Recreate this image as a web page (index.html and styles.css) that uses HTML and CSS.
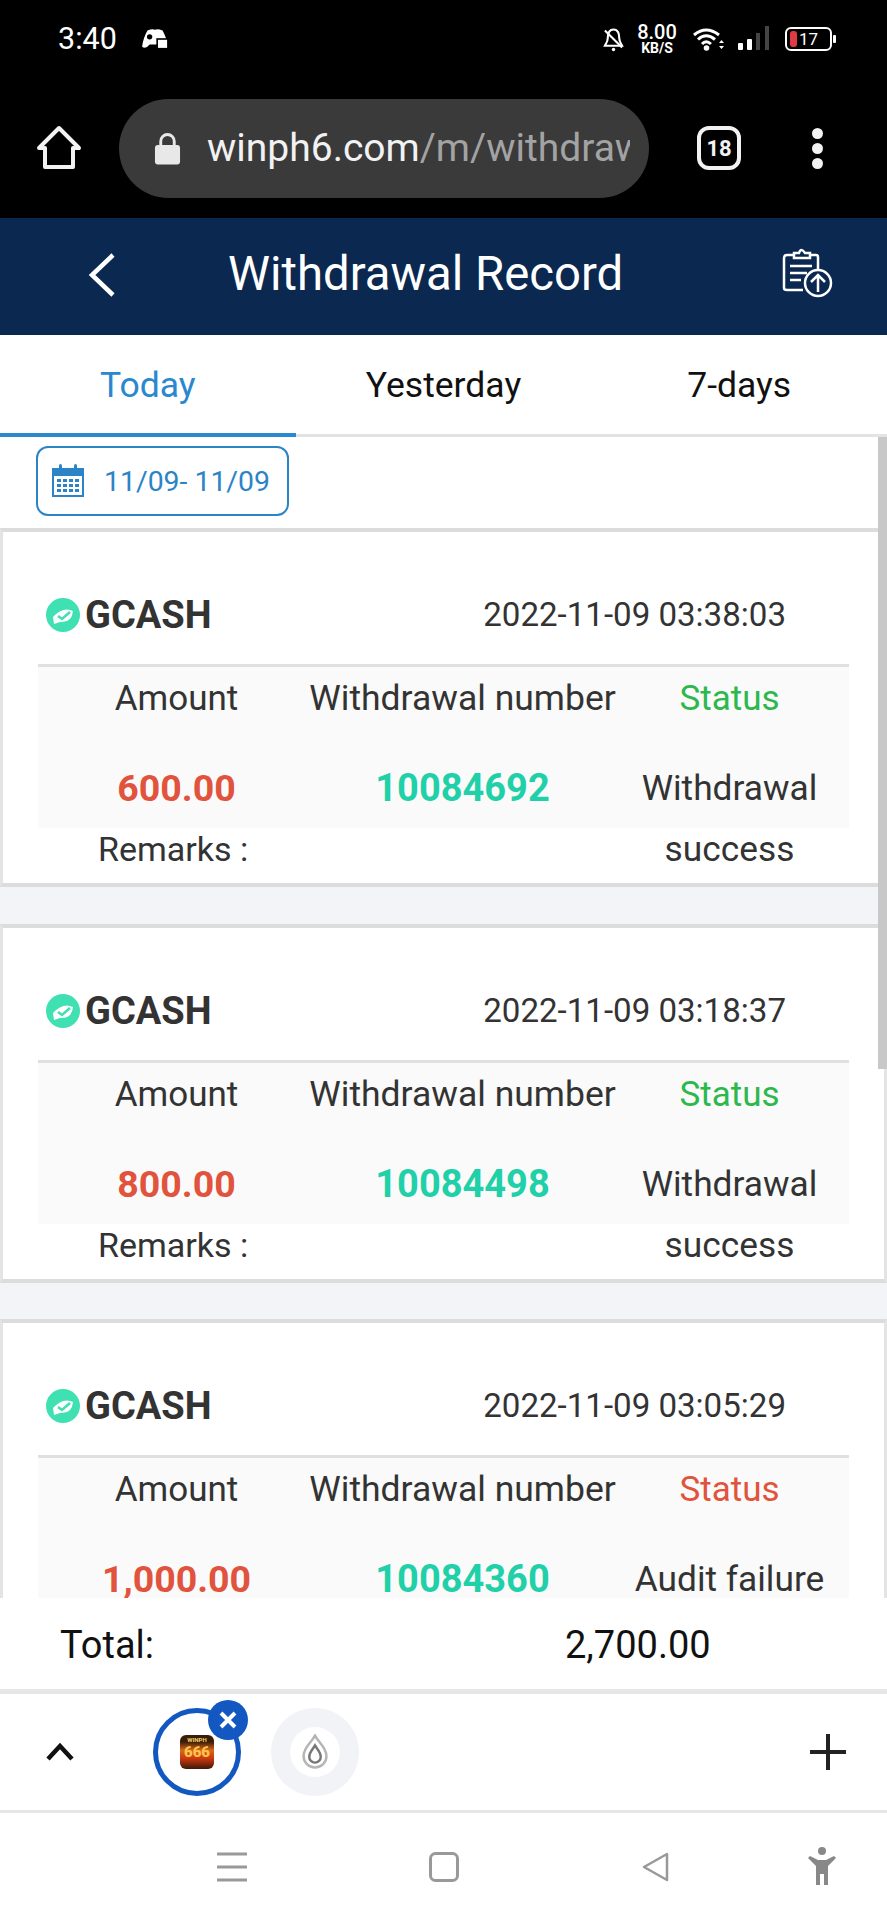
FILE: index.html
```html
<!DOCTYPE html>
<html lang="en">
<head>
<meta charset="utf-8">
<title>Withdrawal Record</title>
<link rel="stylesheet" href="styles.css">
</head>
<body>
<div class="phone">
  <div class="statusbar">
    <div class="status-left">
      <span class="time">3:40</span>
      <svg class="game" viewBox="0 0 26 20"><path d="M6 2 Q11 0 13 1.500 Q15 0 20 2 Q24 9 25 17 Q22 20 18 15 H8 Q4 20 1 17 Q2 9 6 2Z" fill="#fff"/><circle cx="8" cy="8" r="2.500" fill="#000"/><rect x="15" y="10" width="10" height="9" fill="#fff" stroke="#000" stroke-width="1.500"/></svg>
    </div>
    <div class="status-right">
      <svg class="bell" viewBox="0 0 22 26"><path d="M11 3 C6 3 5 8 5 12 C5 16 3 18 2 20 H20 C19 18 17 16 17 12 C17 8 16 3 11 3Z" fill="none" stroke="#fff" stroke-width="2.200"/><path d="M2 4 L20 22" stroke="#fff" stroke-width="2.200"/><circle cx="11" cy="24" r="1.800" fill="#fff"/></svg>
      <div class="speed"><span class="speed-num">8.00</span><span class="speed-unit">KB/S</span></div>
      <svg class="wifi" viewBox="0 0 32 24"><path d="M1 8 Q13 -2 26 8 M5 12.500 Q13 5 22 12.500 M9 17 Q13 12.500 18 17" fill="none" stroke="#fff" stroke-width="3"/><circle cx="13.500" cy="21" r="2.800" fill="#fff"/><path d="M26 16 L28.500 13 L31 16Z M26 19 L28.500 22 L31 19Z" fill="#fff"/></svg>
      <svg class="signal" viewBox="0 0 32 26"><rect x="0" y="17" width="5" height="7" rx="1" fill="#fff"/><rect x="9" y="13" width="5" height="11" rx="1" fill="#fff"/><rect x="18" y="7" width="4" height="17" fill="#444"/><rect x="27" y="0" width="4" height="24" fill="#444"/></svg>
      <div class="battery"><span class="battery-fill"></span><span class="battery-num">17</span><span class="battery-nub"></span></div>
    </div>
  </div>

  <div class="browserbar">
    <svg class="home" viewBox="0 0 46 46"><path d="M23 3 L43 23 H37 V42 H9 V23 H3Z" fill="none" stroke="#f2f2f2" stroke-width="4" stroke-linejoin="round"/></svg>
    <div class="urlbar">
      <svg class="lock" viewBox="0 0 28 34"><path d="M7 15 V10 A7 7 0 0 1 21 10 V15" fill="none" stroke="#e8e8e8" stroke-width="3"/><rect x="1" y="14" width="26" height="20" rx="3" fill="#e8e8e8"/></svg>
      <div class="url"><span class="url-host">winph6.com</span><span class="url-path">/m/withdrawal</span></div>
    </div>
    <div class="tabcount">18</div>
    <div class="dots"><span></span><span></span><span></span></div>
  </div>

  <header class="navbar">
    <svg class="back" viewBox="0 0 28 44"><path d="M25 2 L4 22 L25 42" fill="none" stroke="#fff" stroke-width="4.500"/></svg>
    <h1 class="title">Withdrawal Record</h1>
    <svg class="clip" viewBox="0 0 52 52"><path d="M28 9 H35 Q37 9 37 11 V24 M14 9 H6 Q3 9 3 12 V42 Q3 44 6 44 H22" fill="none" stroke="#fff" stroke-width="2.500"/><path d="M13 11 V7 H18 Q20 1 24 7 H29 V12 H13Z" fill="none" stroke="#fff" stroke-width="2.500"/><path d="M9 20 H31 M9 27 H26 M9 34 H20" stroke="#fff" stroke-width="2.500"/><circle cx="37" cy="37" r="13" fill="none" stroke="#fff" stroke-width="2.500"/><path d="M37 46 V29 M30 36 L37 29 L44 36" fill="none" stroke="#fff" stroke-width="2.500"/></svg>
  </header>

  <nav class="tabs">
    <div class="tab tab-active">Today</div>
    <div class="tab">Yesterday</div>
    <div class="tab">7-days</div>
  </nav>

  <div class="datebar">
    <div class="datebtn">
      <svg class="cal" viewBox="0 0 32 34"><path d="M1 6 H31 V33 H1Z" fill="#fff" stroke="#2b84c6" stroke-width="2"/><rect x="1" y="5" width="30" height="8" fill="#2b84c6"/><rect x="7" y="1" width="3" height="7" rx="1.500" fill="#2b84c6"/><rect x="22" y="1" width="3" height="7" rx="1.500" fill="#2b84c6"/><g fill="#2b84c6"><rect x="5" y="16" width="4" height="3"/><rect x="11" y="16" width="4" height="3"/><rect x="17" y="16" width="4" height="3"/><rect x="23" y="16" width="4" height="3"/><rect x="5" y="21" width="4" height="3"/><rect x="11" y="21" width="4" height="3"/><rect x="17" y="21" width="4" height="3"/><rect x="23" y="21" width="4" height="3"/><rect x="5" y="26" width="4" height="3"/><rect x="11" y="26" width="4" height="3"/><rect x="17" y="26" width="4" height="3"/><rect x="23" y="26" width="4" height="3"/></g></svg>
      <span class="datetext">11/09- 11/09</span>
    </div>
  </div>

  <main class="records">
    <article class="card">
      <div class="card-head">
        <div class="brand"><svg class="gcash" viewBox="0 0 34 34"><circle cx="17" cy="17" r="17" fill="#3fe0b2"/><path d="M7 19 Q17 8 27 13 Q26 25 14 24 L8 26Z" fill="#fff"/><path d="M12 18 L16 21 L24 14" fill="none" stroke="#3fe0b2" stroke-width="2.500"/></svg><span>GCASH</span></div>
        <time class="when">2022-11-09 03:38:03</time>
      </div>
      <div class="grid">
        <div class="cell">Amount</div><div class="cell">Withdrawal number</div><div class="cell st-ok">Status</div>
        <div class="cell amt">600.00</div><div class="cell num">10084692</div><div class="cell val">Withdrawal success</div>
      </div>
      <div class="remarks">Remarks :</div>
    </article>
    <article class="card">
      <div class="card-head">
        <div class="brand"><svg class="gcash" viewBox="0 0 34 34"><circle cx="17" cy="17" r="17" fill="#3fe0b2"/><path d="M7 19 Q17 8 27 13 Q26 25 14 24 L8 26Z" fill="#fff"/><path d="M12 18 L16 21 L24 14" fill="none" stroke="#3fe0b2" stroke-width="2.500"/></svg><span>GCASH</span></div>
        <time class="when">2022-11-09 03:18:37</time>
      </div>
      <div class="grid">
        <div class="cell">Amount</div><div class="cell">Withdrawal number</div><div class="cell st-ok">Status</div>
        <div class="cell amt">800.00</div><div class="cell num">10084498</div><div class="cell val">Withdrawal success</div>
      </div>
      <div class="remarks">Remarks :</div>
    </article>
    <article class="card">
      <div class="card-head">
        <div class="brand"><svg class="gcash" viewBox="0 0 34 34"><circle cx="17" cy="17" r="17" fill="#3fe0b2"/><path d="M7 19 Q17 8 27 13 Q26 25 14 24 L8 26Z" fill="#fff"/><path d="M12 18 L16 21 L24 14" fill="none" stroke="#3fe0b2" stroke-width="2.500"/></svg><span>GCASH</span></div>
        <time class="when">2022-11-09 03:05:29</time>
      </div>
      <div class="grid">
        <div class="cell">Amount</div><div class="cell">Withdrawal number</div><div class="cell st-bad">Status</div>
        <div class="cell amt">1,000.00</div><div class="cell num">10084360</div><div class="cell val">Audit failure</div>
      </div>
    </article>
  </main>

  <div class="scrollthumb"></div>

  <div class="totalbar">
    <span class="total-label">Total:</span>
    <span class="total-value">2,700.00</span>
  </div>

  <div class="tabstrip">
    <svg class="chev" viewBox="0 0 30 20"><path d="M3 17 L15 4 L27 17" fill="none" stroke="#111" stroke-width="4.500"/></svg>
    <div class="bubble bubble-active">
      <div class="logo"><span class="logo-top">WINPH</span><span class="logo-big">666</span></div>
      <div class="close"><svg viewBox="0 0 20 20"><path d="M3 3 L17 17 M17 3 L3 17" stroke="#fff" stroke-width="4"/></svg></div>
    </div>
    <div class="bubble bubble-idle">
      <div class="drop-wrap"><svg class="drop" viewBox="0 0 36 44"><path d="M18 2 C22 10 32 16 32 27 A14 14 0 0 1 4 27 C4 16 14 10 18 2Z" fill="none" stroke="#b5b5b5" stroke-width="3"/><path d="M18 14 C21 19 25 22 25 28 A7 7 0 0 1 11 28 C11 22 15 19 18 14Z" fill="none" stroke="#777" stroke-width="3"/></svg></div>
    </div>
    <svg class="plus" viewBox="0 0 36 36"><path d="M18 0 V36 M0 18 H36" stroke="#222" stroke-width="4"/></svg>
  </div>

  <div class="sysnav">
    <svg class="nav-ico" viewBox="0 0 30 30"><path d="M0 2 H30 M0 15 H30 M0 28 H30" stroke="#999" stroke-width="3"/></svg>
    <svg class="nav-ico" viewBox="0 0 30 30"><rect x="1.500" y="1.500" width="27" height="27" rx="5" fill="none" stroke="#999" stroke-width="3"/></svg>
    <svg class="nav-ico" viewBox="0 0 30 30"><path d="M26 2 V28 L3 15Z" fill="none" stroke="#999" stroke-width="2.500" stroke-linejoin="round"/></svg>
    <svg class="nav-person" viewBox="0 0 30 40"><circle cx="15" cy="4" r="4" fill="#888"/><path d="M1 11 L3 9 L11 13 H19 L27 9 L29 11 L21 19 V38 H17 V27 H13 V38 H9 V19Z" fill="#888"/></svg>
  </div>
</div>
</body>
</html>
```
FILE: styles.css
```css
* { box-sizing: border-box; }
html, body { margin: 0; padding: 0; background: #fff; }
body { font-family: Roboto, "Liberation Sans", sans-serif; }
.phone { position: relative; width: 887px; height: 1920px; display: flex; flex-direction: column; overflow: hidden; }

.statusbar { height: 78px; background: #000; color: #fff; display: flex; justify-content: space-between; align-items: center; padding: 0 55px 0 58px; }
.status-left { display: flex; align-items: center; gap: 24px; }
.time { font-size: 30.500px; line-height: 1; }
.game { width: 28px; height: 22px; }
.status-right { display: flex; align-items: center; }
.bell { width: 21px; height: 26px; margin-right: 12px; }
.speed { width: 42px; display: flex; flex-direction: column; align-items: center; margin-right: 15px; line-height: 1; }
.speed-num { font-size: 20px; font-weight: 500; line-height: 18px; }
.speed-unit { font-size: 14px; font-weight: 700; line-height: 14px; }
.wifi { width: 32px; height: 24px; margin-right: 13px; }
.signal { width: 32px; height: 26px; margin-right: 15px; }
.battery { position: relative; width: 47px; height: 24px; border: 2.500px solid #fff; border-radius: 6px; display: flex; align-items: center; padding-left: 3px; }
.battery-fill { width: 7px; height: 16px; background: #e23a44; border-radius: 3px; }
.battery-num { font-size: 17px; margin-left: 2px; line-height: 1; }
.battery-nub { position: absolute; right: -6px; top: 6px; width: 3px; height: 8px; background: #fff; border-radius: 1px; }

.browserbar { height: 140px; background: #000; display: flex; align-items: center; padding: 0 0 0 36px; }
.home { width: 46px; height: 46px; margin-right: 37px; }
.urlbar { width: 530px; height: 99px; border-radius: 50px; background: #3a3a3a; display: flex; align-items: center; padding: 0 19px 0 35px; }
.lock { width: 27px; height: 34px; flex: none; margin-right: 26px; }
.url { font-size: 39px; white-space: nowrap; overflow: hidden; line-height: 50px; }
.url-host { color: #f2f2f2; }
.url-path { color: #a3a3a3; }
.tabcount { width: 44px; height: 44px; margin-left: 48px; border: 4px solid #f2f2f2; border-radius: 12px; color: #f2f2f2; font-size: 22px; font-weight: 700; display: flex; align-items: center; justify-content: center; }
.dots { margin-left: 71px; display: flex; flex-direction: column; gap: 4px; }
.dots span { width: 11px; height: 11px; border-radius: 50%; background: #f2f2f2; display: block; }

.navbar { height: 117px; background: #0b2850; display: flex; align-items: center; padding: 0 53px 3px 88px; }
.back { width: 28px; height: 44px; flex: none; }
.title { flex: 1; margin: 0 0 0 112px; font-size: 47.300px; font-weight: 400; color: #fff; line-height: 1; white-space: nowrap; }
.clip { width: 52px; height: 52px; flex: none; margin-bottom: 6px; margin-right: 1px; }

.tabs { height: 102px; display: flex; border-bottom: 3px solid #e3e3e3; }
.tab { flex: 1; position: relative; display: flex; align-items: center; justify-content: center; font-size: 35.500px; color: #111; padding-top: 1px; }
.tab-active { color: #2a88cf; }
.tab-active::after { content: ""; position: absolute; left: 0; right: 0; bottom: -3px; height: 4px; background: #2a88cf; }

.datebar { height: 91px; padding: 9px 0 0 36px; }
.datebtn { width: 253px; height: 70px; border: 2.500px solid #2b84c6; border-radius: 12px; display: flex; align-items: center; padding-left: 14px; gap: 20px; }
.cal { width: 32px; height: 34px; flex: none; margin-bottom: 3px; }
.datetext { font-size: 28.400px; color: #2b84c6; white-space: nowrap; }

.records { flex: 1; overflow: hidden; min-height: 0; background: #f3f4f8; display: flex; flex-direction: column; gap: 36.500px; }
.card { flex: none; height: 359px; background: #fff; border-top: 4px solid #dcdcdc; border-bottom: 4px solid #dcdcdc; border-left: 3px solid #e4e4e4; border-right: 3px solid #e4e4e4; padding: 0 35px; }
.card-head { height: 135px; border-bottom: 3px solid #e0e0e0; display: flex; align-items: flex-end; justify-content: space-between; padding: 0 63px 25px 8px; }
.brand { display: flex; align-items: center; gap: 5px; font-size: 38px; font-weight: 700; color: #333; line-height: 48px; }
.gcash { width: 34px; height: 34px; }
.when { font-size: 33.100px; color: #333; line-height: 48px; }
.grid { height: 161px; background: #fafafa; display: grid; grid-template-columns: 277px 295px 239px; grid-template-rows: 62px 99px; font-size: 35px; color: #333; }
.cell { text-align: center; line-height: 61px; white-space: nowrap; padding-top: 1px; }
.grid .cell:nth-child(2) { font-size: 35.500px; display: flex; justify-content: center; }
.grid .cell:nth-child(n+4) { padding-top: 29px; }
.st-ok { color: #2db84d; }
.st-bad { color: #e1533c; }
.amt { color: #e1533c; font-weight: 700; font-size: 37.500px; }
.num { color: #1fd0a8; font-weight: 700; font-size: 38px; }
.val { font-size: 35.300px; white-space: normal; }
.remarks { font-size: 34px; color: #333; line-height: 42px; padding-left: 60px; }
.scrollthumb { position: absolute; right: 0; top: 437px; width: 9px; height: 632px; background: #c8c8c8; }

.totalbar { height: 91px; flex: none; background: #fff; display: grid; grid-template-columns: 505px auto; align-items: center; padding: 3px 0 0 60px; font-size: 38px; color: #111; }
.total-label, .total-value { line-height: 1; }

.tabstrip { height: 124px; flex: none; border-top: 5px solid #e6e6e6; border-bottom: 3px solid #e6e6e6; background: #fff; display: flex; align-items: center; padding: 0 41px 0 45px; }
.chev { width: 30px; height: 20px; margin-right: 78px; flex: none; }
.bubble { width: 88px; height: 88px; border-radius: 50%; position: relative; display: flex; align-items: center; justify-content: center; flex: none; }
.bubble-active { border: 5px solid #1258c0; margin-right: 30px; }
.bubble-idle { background: #f1f3f6; }
.logo { width: 34px; height: 34px; border-radius: 6px; background: linear-gradient(#3a1c08 20%, #d8691a 45%, #c9360f 70%, #3a1a08); display: flex; flex-direction: column; align-items: center; overflow: hidden; }
.logo-top { font-size: 6px; font-weight: 700; line-height: 9px; color: #f3d46a; }
.logo-big { font-size: 15px; font-weight: 900; line-height: 17px; color: #ffc24a; }
.close { position: absolute; top: -13px; right: -12px; width: 40px; height: 40px; border-radius: 50%; background: #1258c0; display: flex; align-items: center; justify-content: center; }
.close svg { width: 20px; height: 20px; }
.drop-wrap { width: 50px; height: 50px; border-radius: 50%; background: #fff; display: flex; align-items: center; justify-content: center; }
.drop { width: 30px; height: 36px; }
.plus { width: 36px; height: 36px; margin-left: auto; flex: none; }

.sysnav { flex: none; height: 107px; background: #fff; display: flex; align-items: center; padding: 0 0 0 217px; }
.nav-ico { width: 30px; height: 30px; margin-right: 182px; flex: none; }
.nav-person { width: 30px; height: 40px; margin-left: -46px; flex: none; }
```
